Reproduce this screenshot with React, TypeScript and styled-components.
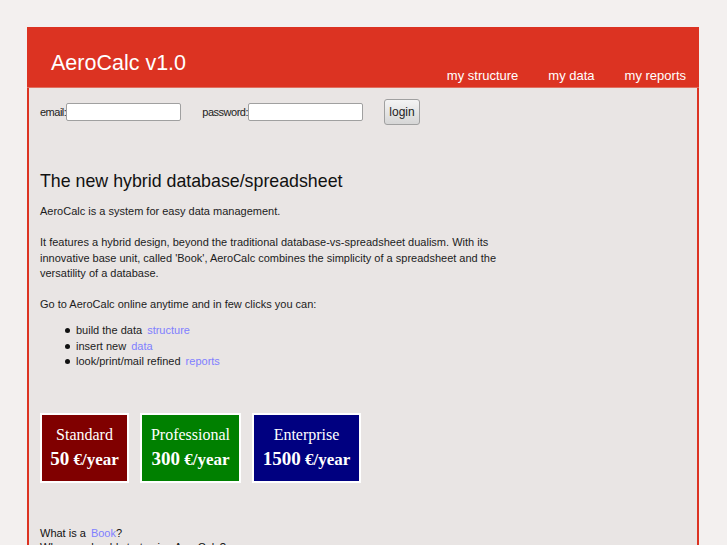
import styled, { createGlobalStyle } from 'styled-components';

const GlobalStyle = createGlobalStyle`
  html, body {
    margin: 0;
    padding: 0;
    background-color: #f3f0ef;
    font-family: "Liberation Sans", Arial, sans-serif;
    color: #1c1c1c;
  }
`;

const plans = [
  { name: 'Standard', amount: '50', color: '#800000', width: 89 },
  { name: 'Professional', amount: '300', color: '#008000', width: 101 },
  { name: 'Enterprise', amount: '1500', color: '#000080', width: 109 },
];

export default function App() {
  return (
    <>
      <GlobalStyle />
      <Page>
        <Container>
          <Header>
            <Title>AeroCalc v1.0</Title>
            <Nav>
              <NavLink>my structure</NavLink>
              <NavLink>my data</NavLink>
              <NavLink>my reports</NavLink>
            </Nav>
          </Header>

          <Content>
            <LoginRow>
              <Field>
                <Label>email:</Label>
                <Input type="text" />
              </Field>
              <Field>
                <Label>password:</Label>
                <Input type="password" />
              </Field>
              <LoginButton>login</LoginButton>
            </LoginRow>

            <Heading>The new hybrid database/spreadsheet</Heading>
            <Text>AeroCalc is a system for easy data management.</Text>
            <Text>
              It features a hybrid design, beyond the traditional database-vs-spreadsheet dualism. With its
              innovative base unit, called 'Book', AeroCalc combines the simplicity of a spreadsheet and the
              versatility of a database.
            </Text>
            <Text $tight>Go to AeroCalc online anytime and in few clicks you can:</Text>
            <List>
              <Item>build the data <Link>structure</Link></Item>
              <Item>insert new <Link>data</Link></Item>
              <Item>look/print/mail refined <Link>reports</Link></Item>
            </List>

            <Plans>
              {plans.map((plan) => (
                <Plan key={plan.name} $color={plan.color} $width={plan.width}>
                  <PlanName>{plan.name}</PlanName>
                  <PlanPrice>
                    <Amount>{plan.amount}</Amount> €/year
                  </PlanPrice>
                </Plan>
              ))}
            </Plans>

            <Question>What is a <Link>Book</Link>?</Question>
            <Question>Why you should start using AeroCalc?</Question>
          </Content>
        </Container>
      </Page>
    </>
  );
}

const Page = styled.div`
  padding: 27px 28px 0 27px;
  height: 545px;
  box-sizing: border-box;
  overflow: hidden;
`;

const Container = styled.div`
  width: 672px;
  box-sizing: border-box;
  border: 2px solid #dc3322;
  border-top: 0;
  background-color: #e9e5e4;
`;

const Header = styled.div`
  display: flex;
  justify-content: space-between;
  align-items: flex-end;
  height: 61px;
  box-sizing: border-box;
  padding: 0 13px 4px 24px;
  margin: 0 -2px;
  background-color: #dc3322;
  border-bottom: 1px solid #e07060;
`;

const Title = styled.h1`
  align-self: center;
  margin: 16px 0 0 0;
  font-size: 21.5px;
  font-weight: normal;
  color: #ffffff;
`;

const Nav = styled.nav`
  display: flex;
  gap: 30px;
`;

const NavLink = styled.span`
  font-size: 13px;
  color: #ffffff;
`;

const Content = styled.div`
  padding: 11px 11px 0 11px;
`;

const LoginRow = styled.div`
  display: flex;
  align-items: center;
  gap: 21px;
  height: 26px;
`;

const Field = styled.label`
  display: flex;
  align-items: center;
`;

const Label = styled.span`
  font-size: 11px;
  letter-spacing: -0.5px;
  color: #222;
`;

const Input = styled.input`
  width: 115px;
  height: 18px;
  box-sizing: border-box;
  margin: 0;
  border: 1px solid #a0a0a0;
  border-radius: 2px;
  background: #ffffff;
`;

const LoginButton = styled.button`
  height: 26px;
  width: 36px;
  padding: 0;
  font-family: "Liberation Sans", Arial, sans-serif;
  font-size: 12px;
  color: #222;
  border: 1px solid #a0a0a0;
  border-radius: 3px;
  background: linear-gradient(#f4f4f4, #d6d6d6);
`;

const Heading = styled.h2`
  margin: 46px 0 12px 0;
  font-size: 17.8px;
  font-weight: normal;
  color: #111;
`;

const Text = styled.p<{ $tight?: boolean }>`
  width: 470px;
  margin: 0 0 ${(p) => (p.$tight ? '10.5px' : '15.5px')} 0;
  font-size: 11px;
  line-height: 15.5px;
`;

const List = styled.ul`
  margin: 0;
  padding-left: 25px;
  list-style: none;
  font-size: 11px;
  line-height: 15.5px;
`;

const Item = styled.li`
  &::before {
    content: '';
    display: inline-block;
    width: 5px;
    height: 5px;
    margin: 0 6px 1px 0;
    vertical-align: middle;
    border-radius: 50%;
    background-color: #111;
  }
`;

const Link = styled.a`
  margin-left: 2px;
  color: #8080ff;
`;

const Plans = styled.div`
  display: flex;
  gap: 11px;
  margin-top: 43px;
`;

const Plan = styled.div<{ $color: string; $width: number }>`
  display: flex;
  flex-direction: column;
  align-items: center;
  justify-content: center;
  gap: 4px;
  width: ${(p) => p.$width}px;
  height: 70px;
  box-sizing: border-box;
  border: 2px solid #ffffff;
  background-color: ${(p) => p.$color};
  color: #ffffff;
  font-family: "Liberation Serif", "Times New Roman", serif;
  white-space: nowrap;
`;

const PlanName = styled.div`
  font-size: 16px;
`;

const PlanPrice = styled.div`
  font-size: 17px;
  font-weight: bold;
`;

const Amount = styled.span`
  font-size: 19px;
`;

const Question = styled.p`
  margin: 43px 0 0 0;
  font-size: 11px;
  line-height: 14px;
  color: #111;

  & + & {
    margin-top: 0;
  }
`;
